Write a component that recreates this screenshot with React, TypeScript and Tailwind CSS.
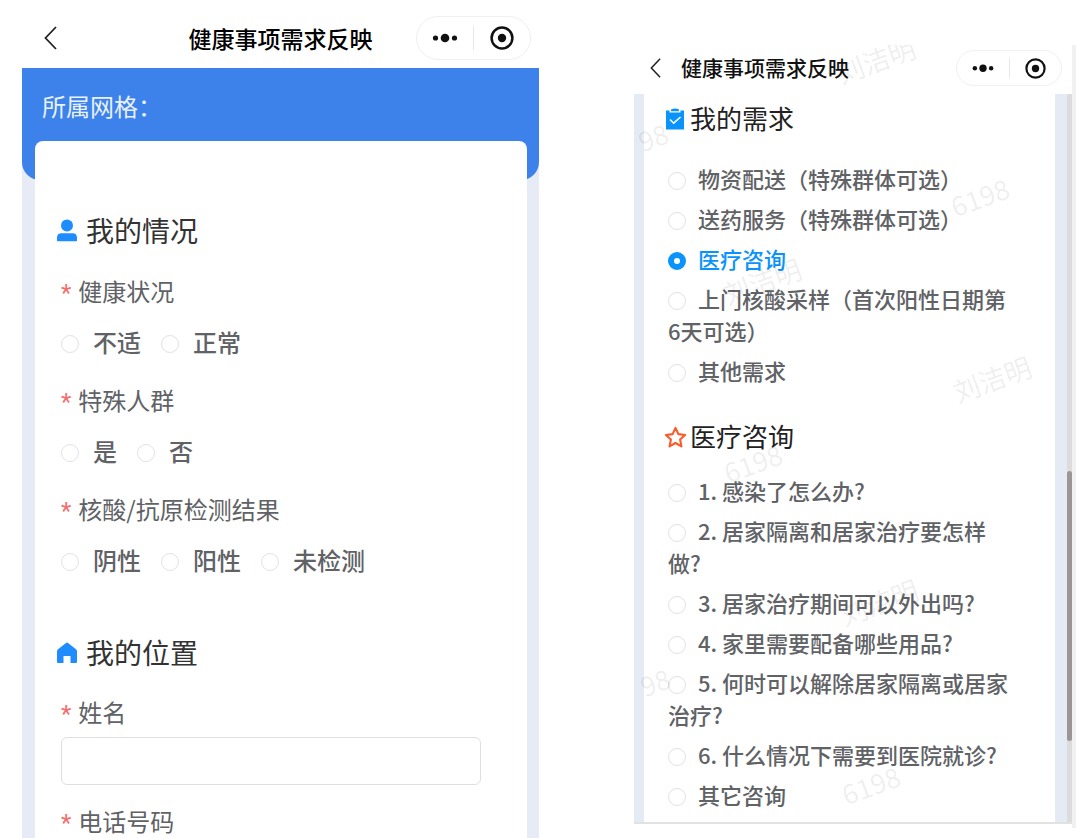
import { useState } from "react";
import clsx from "clsx";

const situationGroups = [
  { name: "health", label: "健康状况", options: ["不适", "正常"] },
  { name: "special", label: "特殊人群", options: ["是", "否"] },
  {
    name: "testResult",
    label: "核酸/抗原检测结果",
    options: ["阴性", "阳性", "未检测"],
  },
];

const needs = [
  "物资配送（特殊群体可选）",
  "送药服务（特殊群体可选）",
  "医疗咨询",
  "上门核酸采样（首次阳性日期第6天可选）",
  "其他需求",
];

const questions = [
  "1. 感染了怎么办?",
  "2. 居家隔离和居家治疗要怎样做?",
  "3. 居家治疗期间可以外出吗?",
  "4. 家里需要配备哪些用品?",
  "5. 何时可以解除居家隔离或居家治疗?",
  "6. 什么情况下需要到医院就诊?",
  "其它咨询",
];

const watermarks = [
  { text: "刘洁明", x: 242, y: 15 },
  { text: "6198", x: 346, y: 152 },
  { text: "98", x: 19, y: 92 },
  { text: "刘洁明", x: 128, y: 236 },
  { text: "刘洁明", x: 358, y: 334 },
  { text: "6198", x: 119, y: 418 },
  { text: "刘洁明", x: 245, y: 557 },
  { text: "98", x: 21, y: 637 },
  { text: "6198", x: 237, y: 740 },
];

const radioClass =
  "size-[18px] shrink-0 appearance-none rounded-full border border-[#dfe2ea] bg-white checked:border-[6px] checked:border-[#0a94fb]";

function Capsule({ small = false }: { small?: boolean }) {
  return (
    <div
      className={clsx(
        "flex items-center rounded-full border border-[#f0f0f0] bg-white",
        small ? "h-9 w-[106px]" : "h-11 w-[115px]",
      )}
    >
      <button
        type="button"
        aria-label="更多"
        className="flex h-full flex-1 items-center justify-center"
      >
        <svg
          viewBox="0 0 28 10"
          className={small ? "w-[24px]" : "w-[28px]"}
          fill="#111"
        >
          <circle cx="4.5" cy="5" r="2.6" />
          <circle cx="14" cy="5" r="4.3" />
          <circle cx="23.5" cy="5" r="2.6" />
        </svg>
      </button>
      <span className={clsx("w-px bg-[#e8e8e8]", small ? "h-5" : "h-6")} />
      <button
        type="button"
        aria-label="关闭"
        className="flex h-full flex-1 items-center justify-center"
      >
        <svg
          viewBox="0 0 24 24"
          className={small ? "size-[21px]" : "size-[24px]"}
        >
          <circle
            cx="12"
            cy="12"
            r="10.4"
            fill="none"
            stroke="#111"
            strokeWidth="2.5"
          />
          <circle cx="12" cy="12" r="4.2" fill="#111" />
        </svg>
      </button>
    </div>
  );
}

function BackButton({ small = false }: { small?: boolean }) {
  return (
    <button type="button" aria-label="返回">
      <svg
        viewBox="0 0 13 24"
        className={small ? "h-5 w-[11px]" : "h-6 w-[13px]"}
        fill="none"
        stroke="#222"
        strokeWidth="1.8"
      >
        <path d="M12 1 1.5 12 12 23" />
      </svg>
    </button>
  );
}

function UserIcon() {
  return (
    <svg viewBox="0 0 20 24" className="h-6 w-5" fill="#1e8cff">
      <circle cx="10" cy="7.500" r="6" />
      <path d="M0 22.500v-3a4.500 4.500 0 0 1 4.500-4.300h11a4.500 4.500 0 0 1 4.500 4.300v3a.8.8 0 0 1-.8.8H.8a.8.8 0 0 1-.8-.8Z" />
    </svg>
  );
}

function HouseIcon() {
  return (
    <svg viewBox="0 0 20 24" className="h-6 w-5" fill="#1e8cff">
      <path d="M9 3Q10 2.200 11 3L19 9.300Q20 10.100 20 11.300V22a1 1 0 0 1-1 1h-5.500v-7h-7v7H1a1 1 0 0 1-1-1V11.300Q0 10.100 1 9.300Z" />
    </svg>
  );
}

function ClipboardIcon() {
  return (
    <svg viewBox="0 0 18 24" className="h-6 w-[18px]">
      <path d="M0 4.500h3.500V6.500h11V4.500H18V23.500H0Z" fill="#0a94fb" />
      <path d="M5 3.500Q9 1.500 13 3.500V5.200H5Z" fill="#0a94fb" />
      <path
        d="m4 13.500 3.700 3.700L14.500 11"
        fill="none"
        stroke="#fff"
        strokeWidth="1.600"
      />
    </svg>
  );
}

function StarIcon() {
  return (
    <svg
      viewBox="0 0 24 24"
      className="size-[23px]"
      fill="none"
      stroke="#fc5a2b"
      strokeWidth="2.2"
      strokeLinejoin="round"
    >
      <path d="m12 3 3 6.500 7 .9-5.200 4.800 1.400 7.100L12 18.800l-6.200 3.500 1.400-7.100L2 10.400l7-.9Z" />
    </svg>
  );
}

function FieldLabel({ text }: { text: string }) {
  return (
    <>
      <span className="mr-[7px] font-[Roboto,sans-serif] leading-none text-[#f56c6c]">
        *
      </span>
      {text}
    </>
  );
}

function SituationPage() {
  return (
    <section className="flex h-screen min-w-0 flex-[517] flex-col overflow-hidden bg-[#e7ebf5]">
      <header className="grid h-[68px] shrink-0 grid-cols-[1fr_auto_1fr] items-center bg-white pt-[14px] pr-2 pb-[6px] pl-[22px]">
        <div className="flex">
          <BackButton />
        </div>
        <h1 className="pr-[14px] text-[23px] font-medium text-black">
          健康事项需求反映
        </h1>
        <div className="flex justify-end">
          <Capsule />
        </div>
      </header>

      <div className="h-28 shrink-0 rounded-b-[18px] bg-[#3c82ea] px-5 pt-5 text-2xl leading-9 text-[#e9f1fd]">
        所属网格：
      </div>

      <form className="relative mr-3 -mt-[39px] ml-[13px] flex-1 rounded-t-lg bg-white pt-[69px] pr-[46px] pl-[26px]">
        <h2 className="-ml-1 flex items-center gap-[9px] text-[28px] leading-10 text-[#333]">
          <UserIcon />
          我的情况
        </h2>
        <div className="mt-[23px] flex flex-col gap-[22px]">
          {situationGroups.map((group) => (
            <fieldset key={group.name}>
              <legend className="text-2xl leading-9 text-[#606266]">
                <FieldLabel text={group.label} />
              </legend>
              <div className="mt-[15px] flex flex-wrap gap-5">
                {group.options.map((option) => (
                  <label
                    key={option}
                    className="flex items-center gap-[14px] text-2xl leading-9 font-medium text-[#606266]"
                  >
                    <input
                      type="radio"
                      name={group.name}
                      value={option}
                      className={clsx(radioClass, "mt-1")}
                    />
                    {option}
                  </label>
                ))}
              </div>
            </fieldset>
          ))}
        </div>

        <h2 className="mt-[54px] -ml-1 flex items-center gap-[9px] text-[28px] leading-10 text-[#333]">
          <HouseIcon />
          我的位置
        </h2>
        <div className="mt-[22px] text-2xl leading-9 text-[#606266]">
          <label htmlFor="userName" className="block">
            <FieldLabel text="姓名" />
          </label>
          <input
            id="userName"
            type="text"
            className="mt-[7px] block h-12 w-full rounded-md border border-[#dedfe3] px-4 outline-none"
          />
          <label htmlFor="phone" className="mt-[18px] block">
            <FieldLabel text="电话号码" />
          </label>
          <input
            id="phone"
            type="tel"
            className="mt-[7px] block h-12 w-full rounded-md border border-[#dedfe3] px-4 outline-none"
          />
        </div>
      </form>
    </section>
  );
}

function ChoiceList({
  name,
  options,
  value,
  onChange,
}: {
  name: string;
  options: string[];
  value: string;
  onChange: (value: string) => void;
}) {
  return (
    <div className="flex flex-col gap-2">
      {options.map((option) => (
        <label
          key={option}
          className={clsx(
            "block text-[22px] leading-8 font-medium",
            option === value ? "text-[#0a94fb]" : "text-[#606266]",
          )}
        >
          <input
            type="radio"
            name={name}
            value={option}
            checked={option === value}
            onChange={() => onChange(option)}
            className={clsx(radioClass, "mr-3 inline-block align-[-2px]")}
          />
          {option}
        </label>
      ))}
    </div>
  );
}

function NeedsPage() {
  const [need, setNeed] = useState("医疗咨询");
  const [question, setQuestion] = useState("");

  return (
    <section className="relative mt-[45px] flex min-w-0 flex-[442] self-start overflow-hidden pb-1">
      <div className="min-w-0 flex-1">
        <header className="flex h-[49px] items-center bg-white pr-[10px] pb-[3px] pl-4">
          <BackButton small />
          <h1 className="ml-5 flex-1 text-[21px] font-medium whitespace-nowrap text-[#111]">
            健康事项需求反映
          </h1>
          <Capsule small />
        </header>

        <div className="flex border-b-2 border-[#e2e2e2] bg-[#e4ebf5]">
          <form className="mr-3 ml-[10px] flex-1 bg-white pt-[6px] pr-[45px] pb-3 pl-6">
            <h2 className="-ml-[2px] flex items-center gap-[6px] text-[26px] leading-9 text-[#222]">
              <ClipboardIcon />
              我的需求
            </h2>
            <div className="mt-[26px]">
              <ChoiceList
                name="need"
                options={needs}
                value={need}
                onChange={setNeed}
              />
            </div>
            <h2 className="mt-8 -ml-1 flex items-center gap-[3px] text-[26px] leading-9 text-[#222]">
              <StarIcon />
              医疗咨询
            </h2>
            <div className="mt-5">
              <ChoiceList
                name="question"
                options={questions}
                value={question}
                onChange={setQuestion}
              />
            </div>
          </form>
          {/* scroll track */}
          <div className="flex w-[5px] flex-col bg-[#dcdcdc]">
            <div className="flex-[378]" />
            <div className="flex-[270] rounded-full bg-[#9b9693]" />
            <div className="flex-[81]" />
          </div>
        </div>
      </div>
      <div className="-mb-1 w-1 bg-[#f1f1f1]" />

      <div
        aria-hidden="true"
        className="pointer-events-none absolute inset-0 text-[27px] leading-8 text-black/8"
      >
        {watermarks.map((mark) => (
          <span
            key={`${mark.x}-${mark.y}`}
            className="absolute -translate-x-1/2 -translate-y-1/2 -rotate-[20deg] whitespace-nowrap"
            style={{ left: mark.x, top: mark.y }}
          >
            {mark.text}
          </span>
        ))}
      </div>
    </section>
  );
}

export default function App() {
  return (
    <main className="flex h-screen gap-[95px] overflow-hidden bg-white pr-1 pl-[22px] font-['Noto_Sans_CJK_SC',sans-serif]">
      <SituationPage />
      <NeedsPage />
    </main>
  );
}
